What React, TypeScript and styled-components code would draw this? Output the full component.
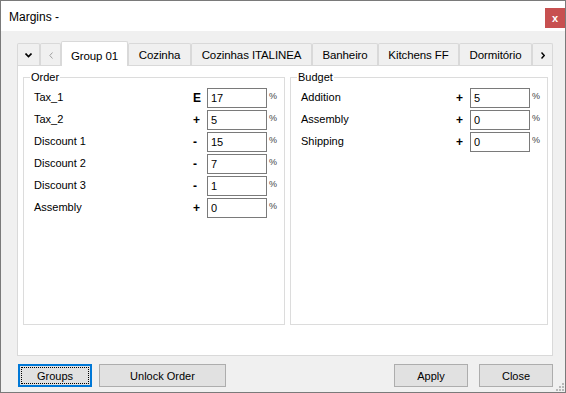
import React from 'react';
import styled, { createGlobalStyle } from 'styled-components';

const GlobalStyle = createGlobalStyle`
  html, body {
    margin: 0;
    padding: 0;
    background: #ffffff;
  }
`;

// Dialog frame
const Window = styled.div`
  position: relative;
  width: 566px;
  height: 393px;
  box-sizing: border-box;
  border: 1px solid #7a7a7a;
  background: #f0f0f0;
  display: flex;
  flex-direction: column;
  font-family: "Liberation Sans", Arial, sans-serif;
  color: #000;
`;

const TitleBar = styled.div`
  height: 30px;
  flex: none;
  background: #ffffff;
  display: flex;
  align-items: flex-start;
  justify-content: space-between;
`;

const Title = styled.div`
  padding: 8px 0 0 8px;
  font-size: 12px;
  line-height: 16px;
`;

const CloseX = styled.div`
  margin-top: 7px;
  width: 20px;
  height: 20px;
  background: #c75050;
  color: #fff;
  display: grid;
  place-items: center;
  font-size: 11px;
  font-weight: bold;
  line-height: 1;
`;

const Body = styled.div`
  flex: 1;
  padding: 10px 12px 0 16px;
  display: flex;
  flex-direction: column;
`;

// Tabs
const TabStrip = styled.div`
  display: flex;
  align-items: flex-end;
  height: 24px;
`;

const Tab = styled.div<{ $w: number; $active?: boolean }>`
  position: relative;
  box-sizing: border-box;
  width: ${p => p.$w}px;
  height: ${p => (p.$active ? 25 : 22)}px;
  margin-bottom: ${p => (p.$active ? -1 : 0)}px;
  z-index: ${p => (p.$active ? 1 : 0)};
  padding-top: ${p => (p.$active ? 3 : 1)}px;
  border: 1px solid #d9d9d9;
  border-bottom: none;
  border-radius: 2px 2px 0 0;
  background: ${p => (p.$active ? '#ffffff' : '#f0f0f0')};
  display: flex;
  align-items: center;
  justify-content: center;
  font-size: 11.5px;
  letter-spacing: -0.1px;
  white-space: nowrap;
`;

const Panel = styled.div`
  height: 291px;
  box-sizing: border-box;
  border: 1px solid #d9d9d9;
  background: #ffffff;
  padding: 5px 4px 30px 5px;
  display: flex;
  gap: 5px;
`;

// Group boxes
const Group = styled.fieldset<{ $w: number }>`
  width: ${p => p.$w}px;
  box-sizing: border-box;
  margin: 0;
  padding: 0;
  min-width: 0;
  border: 1px solid #dcdcdc;
`;

const Legend = styled.legend`
  margin-left: 6px;
  padding: 0 1px;
  font-size: 11px;
  line-height: 13px;
`;

const Rows = styled.div`
  display: grid;
  grid-template-columns: 1fr 16px 60px 14px;
  grid-auto-rows: 20px;
  row-gap: 2px;
  align-items: center;
  padding: 4px 3px 0 10px;
`;

const Label = styled.div`
  font-size: 11px;
  margin-top: -2px;
`;

const Sign = styled.div`
  font-size: 12px;
  font-weight: bold;
  padding-left: 2px;
`;

const Field = styled.input`
  box-sizing: border-box;
  width: 60px;
  height: 20px;
  margin: 0;
  border: 1px solid #7a7a7a;
  padding: 0 3px;
  font-family: "Liberation Sans", Arial, sans-serif;
  font-size: 11px;
  color: #000;
  background: #fff;
  outline: none;
`;

const Pct = styled.div`
  align-self: start;
  margin-top: 3px;
  padding-left: 2px;
  font-size: 9px;
  color: #444;
`;

// Bottom buttons
const Footer = styled.div`
  margin-top: 8px;
  display: flex;
  align-items: center;
  padding-left: 1px;
`;

const Button = styled.div<{ $w: number; $gap?: number; $focused?: boolean }>`
  position: relative;
  box-sizing: border-box;
  width: ${p => p.$w}px;
  height: 23px;
  margin-left: ${p => p.$gap ?? 0}px;
  background: #e1e1e1;
  border: ${p => (p.$focused ? '2px solid #0078d7' : '1px solid #adadad')};
  display: flex;
  align-items: center;
  justify-content: center;
  font-size: 11px;

  ${p =>
    p.$focused &&
    `&::after {
      content: '';
      position: absolute;
      inset: 1px;
      border: 1px dotted #000;
    }`}
`;

const Spacer = styled.div`
  flex: 1;
`;

const Grip = styled.svg`
  position: absolute;
  right: 1px;
  bottom: 1px;
`;

type Row = { label: string; sign: string; value: string };

const order: Row[] = [
  { label: 'Tax_1', sign: 'E', value: '17' },
  { label: 'Tax_2', sign: '+', value: '5' },
  { label: 'Discount 1', sign: '-', value: '15' },
  { label: 'Discount 2', sign: '-', value: '7' },
  { label: 'Discount 3', sign: '-', value: '1' },
  { label: 'Assembly', sign: '+', value: '0' },
];

const budget: Row[] = [
  { label: 'Addition', sign: '+', value: '5' },
  { label: 'Assembly', sign: '+', value: '0' },
  { label: 'Shipping', sign: '+', value: '0' },
];

const tabs = [
  { name: 'Group 01', w: 67, active: true },
  { name: 'Cozinha', w: 63 },
  { name: 'Cozinhas ITALINEA', w: 121 },
  { name: 'Banheiro', w: 66 },
  { name: 'Kitchens FF', w: 81 },
  { name: 'Dormitório', w: 73 },
];

const GroupBox = ({ title, rows, w }: { title: string; rows: Row[]; w: number }) => (
  <Group $w={w}>
    <Legend>{title}</Legend>
    <Rows>
      {rows.map(r => (
        <React.Fragment key={r.label}>
          <Label>{r.label}</Label>
          <Sign>{r.sign}</Sign>
          <Field defaultValue={r.value} />
          <Pct>%</Pct>
        </React.Fragment>
      ))}
    </Rows>
  </Group>
);

const App = () => (
  <>
    <GlobalStyle />
    <Window>
      <TitleBar>
        <Title>Margins -</Title>
        <CloseX>x</CloseX>
      </TitleBar>
      <Body>
        <TabStrip>
          <Tab $w={23}>
            <svg width="7" height="5" viewBox="0 0 7 5">
              <path d="M0.5 0.5 L3.5 3.5 L6.5 0.5" fill="none" stroke="#000" strokeWidth="1.6" />
            </svg>
          </Tab>
          <Tab $w={21}>
            <svg width="4" height="7" viewBox="0 0 4 7">
              <path d="M3.5 0.5 L0.8 3.5 L3.5 6.5" fill="none" stroke="#a0a0a0" strokeWidth="1" />
            </svg>
          </Tab>
          {tabs.map(t => (
            <Tab key={t.name} $w={t.w} $active={t.active}>
              {t.name}
            </Tab>
          ))}
          <Tab $w={21}>
            <svg width="4" height="7" viewBox="0 0 4 7">
              <path d="M0.5 0.5 L3.2 3.5 L0.5 6.5" fill="none" stroke="#000" strokeWidth="1.4" />
            </svg>
          </Tab>
        </TabStrip>
        <Panel>
          <GroupBox title="Order" rows={order} w={262} />
          <GroupBox title="Budget" rows={budget} w={258} />
        </Panel>
        <Footer>
          <Button $w={74} $focused>Groups</Button>
          <Button $w={127} $gap={7}>Unlock Order</Button>
          <Spacer />
          <Button $w={74}>Apply</Button>
          <Button $w={74} $gap={11}>Close</Button>
        </Footer>
      </Body>
      <Grip width="9" height="9" viewBox="0 0 9 9">
        <g fill="#b8b8b8">
          <rect x="7" y="1" width="2" height="2" />
          <rect x="4" y="4" width="2" height="2" />
          <rect x="7" y="4" width="2" height="2" />
          <rect x="1" y="7" width="2" height="2" />
          <rect x="4" y="7" width="2" height="2" />
          <rect x="7" y="7" width="2" height="2" />
        </g>
      </Grip>
    </Window>
  </>
);

export default App;
